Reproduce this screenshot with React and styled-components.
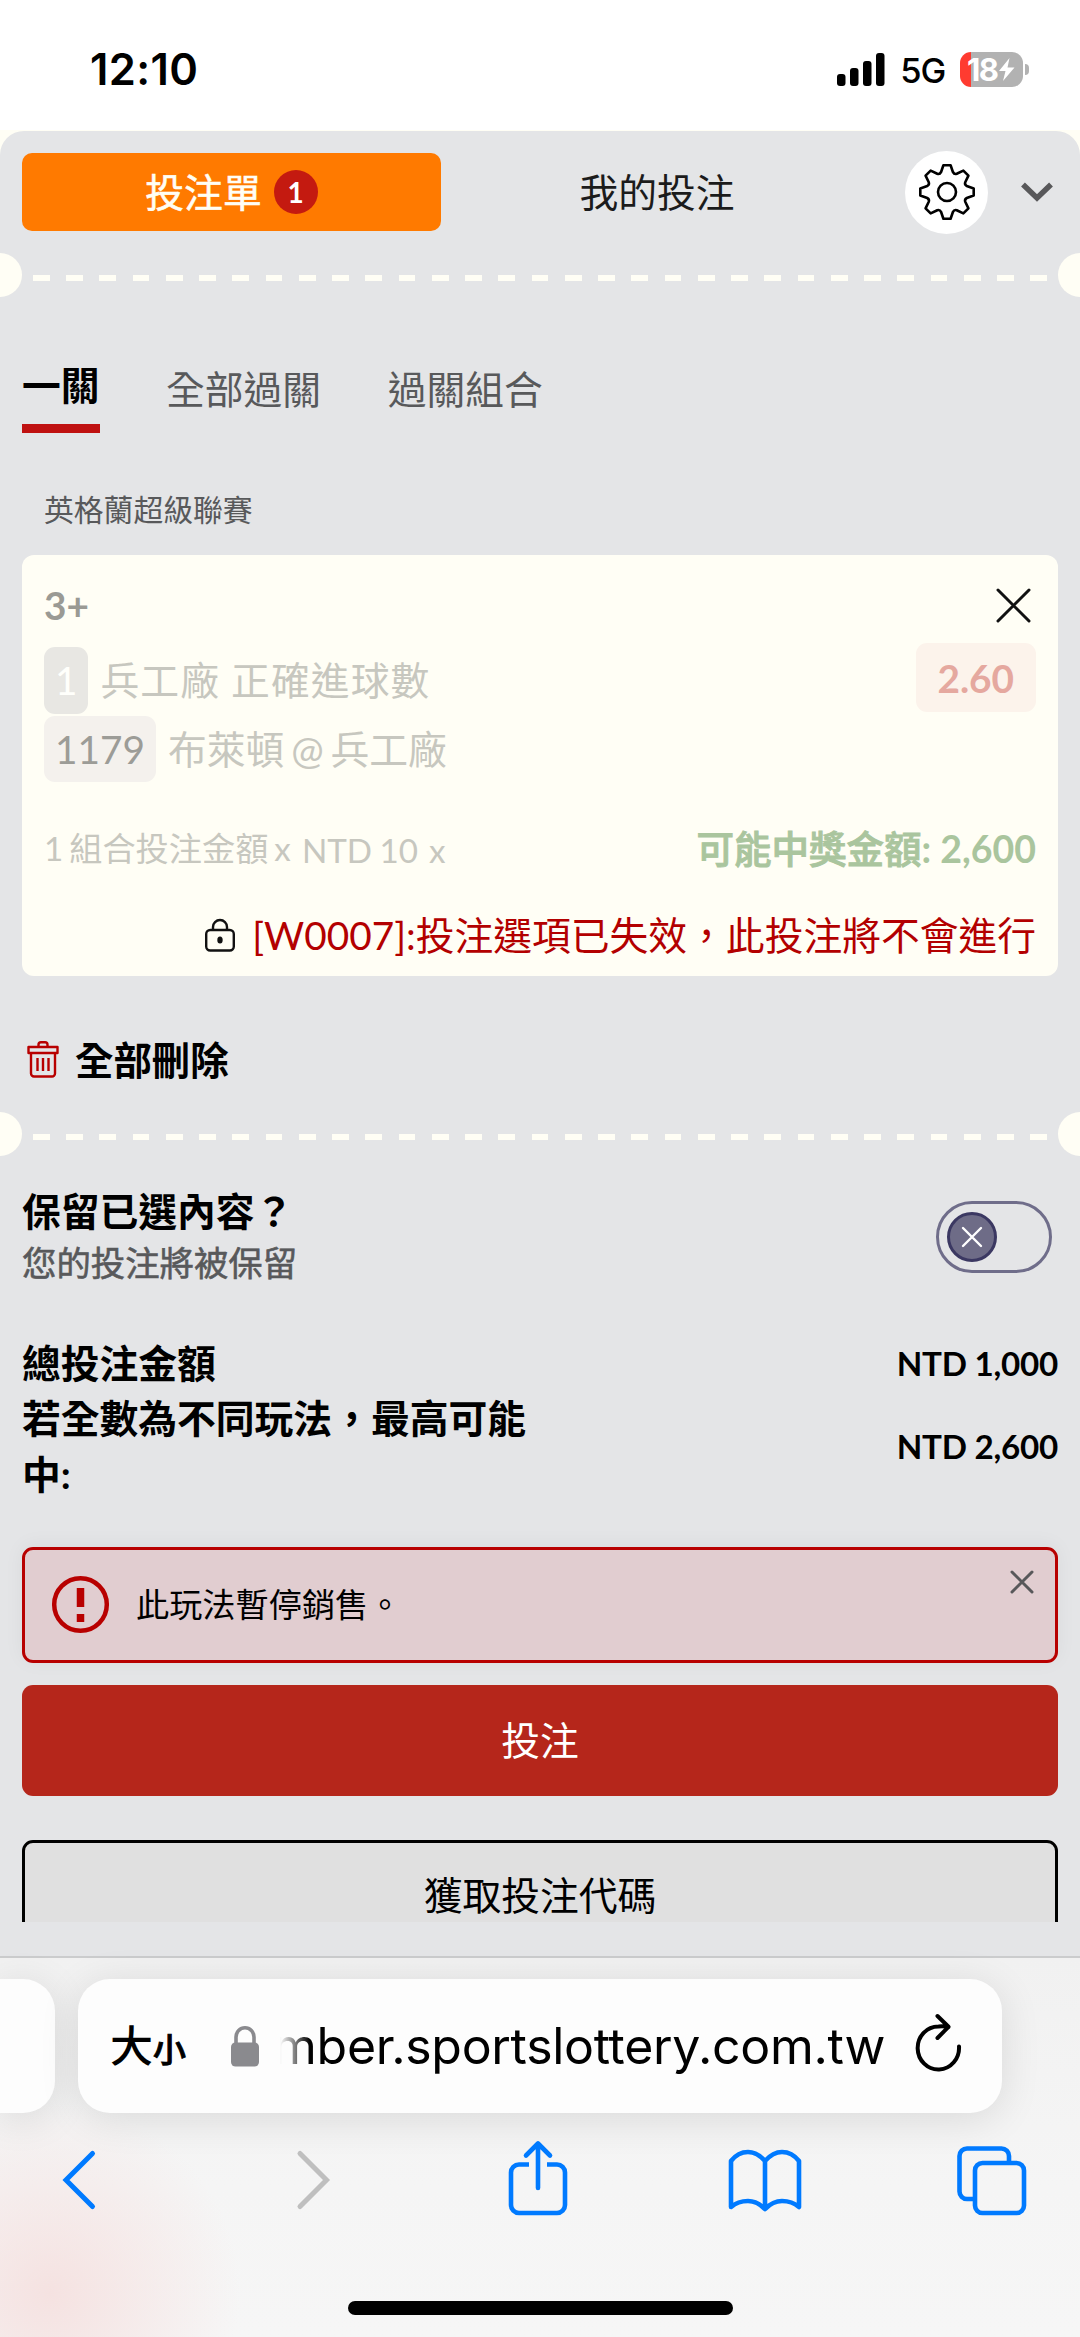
import React from "react"
import styled, { createGlobalStyle } from "styled-components"

const Colors = {
  Paper: "#fffef5",
  Slip: "#e4e5e7",
  Orange: "#ff7a00",
  Red: "#b5261b",
  ErrorRed: "#b80000",
  Grey: "#58595b",
  Blue: "#007aff",
}

const GlobalStyle = createGlobalStyle`
  * {
    box-sizing: border-box;
  }

  body {
    margin: 0;
    background: #fff;
    color: #000;
    font-family: Lato, "Noto Sans CJK TC", sans-serif;
    font-size: 38.77px;
  }

  button {
    border: 0;
    padding: 0;
    background: none;
    color: inherit;
    font: inherit;
  }

  svg {
    display: block;
    flex: none;
    overflow: visible;
  }
`

const Screen = styled.div`
  width: 1080px;
  height: 2337px;
  overflow: hidden;
  display: flex;
  flex-direction: column;
`

/* Status bar */

const StatusBar = styled.header`
  flex: none;
  height: 130px;
  padding: 8px 51px 0 90px;
  display: flex;
  align-items: center;
  justify-content: space-between;
  font-family: Inter, sans-serif;
`

const Time = styled.span`
  font-size: 43.5px;
  font-weight: 600;
  letter-spacing: 0.4px;
`

const StatusIcons = styled.div`
  display: flex;
  align-items: center;
  gap: 15px;
`

const Network = styled.span`
  font-size: 34.5px;
  font-weight: 500;
  line-height: 36px;
  letter-spacing: -1.2px;
  padding-top: 3px;
`

const BatteryWrapper = styled.div`
  display: flex;
  align-items: center;
  gap: 2px;
`

const Battery = styled.div`
  width: 63px;
  height: 35px;
  border-radius: 11px;
  padding-left: 7px;
  display: flex;
  align-items: center;
  background: linear-gradient(90deg, #ff3b30 11px, #b2b2b2 11px);
  color: #fff;
  font-size: 31px;
  font-weight: 700;
  letter-spacing: -1.5px;
`

const BatteryTip = styled.span`
  width: 4px;
  height: 11px;
  border-radius: 0 6px 6px 0;
  background: #b2b2b2;
`

/* Bet slip */

const SlipBackdrop = styled.div`
  flex: none;
  height: 1826px;
  padding-top: 1px;
  background: ${Colors.Paper};
`

const Slip = styled.main`
  height: 1825px;
  border-radius: 24px 24px 0 0;
  background: ${Colors.Slip};
`

const SlipHeader = styled.div`
  height: 122px;
  padding: 0 27px 0 22px;
  display: flex;
  align-items: center;
`

const HeaderTab = styled.button`
  width: ${({ $width }) => $width}px;
  height: 78px;
  border-radius: 10px;
  display: flex;
  align-items: center;
  justify-content: center;
  gap: 12px;
  line-height: 54px;
  background: ${({ $active }) => ($active ? Colors.Orange : "transparent")};
  color: ${({ $active }) => ($active ? Colors.Paper : "#1b1b1b")};
  -webkit-text-stroke: ${({ $active }) => ($active ? "0.6px" : "0")};
`

const Count = styled.span`
  width: 44px;
  height: 44px;
  border-radius: 50%;
  background: #c41a10;
  color: #fff;
  font-size: 28px;
  font-weight: 700;
  line-height: 44px;
  -webkit-text-stroke: 0;
`

const SettingsButton = styled.button`
  width: 83px;
  height: 83px;
  margin: 0 33px 0 auto;
  border-radius: 50%;
  display: flex;
  align-items: center;
  justify-content: center;
  background: #fff;
`

const PerforationWrapper = styled.div`
  height: 44px;
  display: flex;
  align-items: center;
  justify-content: space-between;
`

const Notch = styled.span`
  width: 22px;
  height: 44px;
  border-radius: ${({ $right }) => ($right ? "22px 0 0 22px" : "0 22px 22px 0")};
  background: ${Colors.Paper};
`

const Dashes = styled.span`
  width: 1014px;
  height: 6px;
  margin-top: 6px;
  background: repeating-linear-gradient(
    90deg,
    ${Colors.Paper} 0 16.6px,
    transparent 16.6px 33.25px
  );
`

const BetTypes = styled.nav`
  height: 136px;
  padding: 0 22px;
  display: flex;
  align-items: flex-end;
  gap: 66.5px;
`

const BetType = styled.button`
  height: 76px;
  line-height: ${({ $active }) => ($active ? 56 : 65)}px;
  padding-bottom: ${({ $active }) => ($active ? 11 : 11)}px;
  border-bottom: ${({ $active }) => ($active ? "9px solid #bf1111" : "0")};
  color: ${({ $active }) => ($active ? "#000" : Colors.Grey)};
  font-weight: ${({ $active }) => ($active ? 700 : 400)};
`

const League = styled.p`
  height: 121.5px;
  margin: 0;
  padding: 57px 44px 0;
  color: ${Colors.Grey};
  font-size: 29.8px;
  line-height: 40px;
`

const Card = styled.section`
  height: 421.5px;
  margin: 0 22px;
  padding: 27.5px 22px 0;
  border-radius: 12px;
  background: ${Colors.Paper};
  color: #c7c7bf;
`

const CardRow = styled.div`
  height: ${({ $height }) => $height}px;
  margin-top: ${({ $top }) => $top || 0}px;
  display: flex;
  align-items: ${({ $align }) => $align || "center"};
  justify-content: space-between;
`

const Pick = styled.strong`
  color: #9a9a94;
  line-height: 46px;
`

const CloseButton = styled.button`
  padding: 0 7px 0 0;
`

const Line = styled.div`
  margin-top: ${({ $top }) => $top || 0}px;
  display: flex;
  align-items: center;
  gap: 12px;
  line-height: 65px;
  letter-spacing: ${({ $spacing }) => $spacing || 0}px;
  word-spacing: ${({ $word }) => $word || 0}px;
`

const Tag = styled.span`
  height: 66.5px;
  padding: 1px 11px 0;
  border-radius: 11px;
  letter-spacing: 0;
  background: ${({ $muted }) => ($muted ? "#e8e7e3" : "#f4f1ed")};
  color: ${({ $muted }) => ($muted ? "#fffffb" : "#9c9c97")};
`

const Odds = styled.strong`
  width: 120.5px;
  height: 69px;
  border-radius: 11px;
  background: #fcf3eb;
  color: #e5a89f;
  line-height: 71px;
  text-align: center;
`

const Stake = styled.div`
  display: flex;
  align-items: center;
  gap: 11px;
  font-size: 33.2px;
  line-height: 46px;
  padding-bottom: 4px;
  word-spacing: -2.5px;
`

const StakeAmount = styled.span`
  padding-top: 4px;
  word-spacing: ${({ $word }) => $word || 0}px;
`

const Winnings = styled.span`
  padding-bottom: 2px;
  color: #aac59e;
  font-size: 37.5px;
  font-weight: 700;
  line-height: 48px;
`

const CjkMedium = styled.span`
  font-weight: 500;
  -webkit-text-stroke: 0.9px;
`

const CardError = styled.div`
  height: 50px;
  margin-top: 35px;
  display: flex;
  align-items: center;
  justify-content: flex-end;
  gap: 17px;
  color: #b30000;
  line-height: 48px;
  white-space: nowrap;
`

const DeleteAll = styled.button`
  height: 136px;
  padding: 31px 27px 0;
  display: flex;
  align-items: center;
  gap: 16px;
  font-size: 38.4px;
  font-weight: 700;
  line-height: 56px;
`

const KeepRow = styled.div`
  height: 130px;
  padding: 24px 28px 0 22px;
  display: flex;
  align-items: center;
  justify-content: space-between;
`

const KeepTitle = styled.div`
  font-weight: 700;
  line-height: 60px;
`

const KeepHint = styled.div`
  color: ${Colors.Grey};
  font-size: 34.4px;
  line-height: 44px;
  -webkit-text-stroke: 0.6px;
`

const Toggle = styled.button`
  width: 116px;
  height: 72px;
  margin-top: 8px;
  padding-left: 8px;
  border: 3px solid #6f6d8a;
  border-radius: 36px;
  display: flex;
  align-items: center;
`

const Knob = styled.span`
  width: 50px;
  height: 50px;
  border: 3px solid #3b3862;
  border-radius: 50%;
  display: flex;
  align-items: center;
  justify-content: center;
  background: #6e6c87;
`

const Totals = styled.dl`
  margin: 50px 22px 45px;
  display: grid;
  grid-template-columns: 530px auto;
  align-items: center;
  justify-content: space-between;
  font-weight: 700;
  line-height: 55.4px;

  dt,
  dd {
    margin: 0;
  }

  dd {
    font-size: 33.2px;
    text-align: right;
    letter-spacing: -0.25px;
  }
`

const Alert = styled.div`
  height: 116px;
  margin: 0 22px;
  padding: 0 22px 0 27px;
  border: 3px solid ${Colors.ErrorRed};
  border-radius: 11px;
  display: flex;
  align-items: center;
  gap: 27px;
  background: #e1cdd0;
  box-shadow: 0 -2px 20px rgba(0, 0, 0, 0.05);
  font-size: 33.2px;
  line-height: 50px;

  svg,
  span {
    margin-bottom: 2px;
  }
`

const AlertClose = styled.button`
  align-self: flex-start;
  margin: 22px 1px 0 auto;
`

const PlaceBet = styled.button`
  display: block;
  width: 1036px;
  height: 111px;
  margin: 22px 22px 44px;
  padding-bottom: 5px;
  border-radius: 11px;
  background: ${Colors.Red};
  color: #fff;
`

const Fold = styled.div`
  height: 82px;
  padding: 0 22px;
  overflow: hidden;
`

const CodeButton = styled.button`
  width: 100%;
  height: 111px;
  padding-bottom: 5px;
  border: 3px solid #000;
  border-radius: 11px;
  background: #e0e0e0;
`

/* Browser bar */

const BrowserBar = styled.footer`
  flex: 1;
  border-top: 2px solid #cbcccd;
  display: flex;
  flex-direction: column;
  align-items: center;
  background:
    radial-gradient(circle at 50px 335px, #f5e2e1 0, rgba(245, 228, 227, 0) 190px),
    linear-gradient(#f1f1f1, #f5f5f5 60%, #f6f6f6);
`

const AddressRow = styled.div`
  width: 100%;
  margin-top: 21px;
  display: flex;
  gap: 23px;
`

const AddressTab = styled.div`
  width: ${({ $width }) => $width}px;
  height: 133.5px;
  border-radius: ${({ $cut }) => ($cut ? "0 32px 32px 0" : "32px")};
  padding: ${({ $cut }) => ($cut ? 0 : "0 41px 0 32px")};
  display: flex;
  align-items: center;
  background: #fdfdfd;
  box-shadow: 0 6px 40px rgba(0, 0, 0, 0.11);
`

const TextSize = styled.span`
  width: 121px;
  font-family: "Noto Sans CJK TC", sans-serif;
  font-size: 43px;
  font-weight: 500;
  line-height: 60px;

  small {
    font-size: 33px;
    -webkit-text-stroke: 0.9px;
  }
`

const Url = styled.span`
  flex: none;
  width: 613px;
  margin: 0 auto 0 13px;
  overflow: hidden;
  display: flex;
  justify-content: flex-end;
  font-family: Inter, sans-serif;
  font-size: 50px;
  line-height: 66px;
  letter-spacing: -0.3px;
  white-space: nowrap;
  mask-image: linear-gradient(90deg, transparent 8px, #000 38px);
`

const ReloadIcon = styled.svg`
  margin-bottom: 7px;
`

const Toolbar = styled.div`
  width: 100%;
  height: 136px;
  padding: 0 50px 0 40.5px;
  display: flex;
  align-items: center;
  justify-content: space-between;
  color: ${Colors.Blue};
`

const HomeIndicator = styled.div`
  width: 385px;
  height: 14px;
  margin-top: 52px;
  border-radius: 7px;
  background: #000;
`

const Cross = ({ size, width, color = "currentColor" }) => (
  <svg width={size} height={size} fill="none" stroke={color} strokeWidth={width} strokeLinecap="round">
    <path d={`M0 0L${size} ${size}M${size} 0L0 ${size}`} />
  </svg>
)

const Perforation = () => (
  <PerforationWrapper>
    <Notch />
    <Dashes />
    <Notch $right />
  </PerforationWrapper>
)

const Signal = () => (
  <svg width="48" height="33">
    <rect x="0" y="21" width="8.5" height="12" rx="3" />
    <rect x="13" y="15" width="8.5" height="18" rx="3" />
    <rect x="26" y="8" width="8.5" height="25" rx="3" />
    <rect x="39" y="0" width="8.5" height="33" rx="3" />
  </svg>
)

// one tooth per 45 degrees, with the valley that follows it
const gearPath = () => {
  const rotate = (x, y, step) => {
    const a = (step * Math.PI) / 4
    const rx = x * Math.cos(a) - y * Math.sin(a)
    const ry = x * Math.sin(a) + y * Math.cos(a)
    return `${rx.toFixed(2)} ${ry.toFixed(2)}`
  }
  const teeth = [0, 1, 2, 3, 4, 5, 6, 7].map(
    (i) =>
      `${rotate(-3.6, -26.7, i)}L${rotate(3.6, -26.7, i)}L${rotate(6, -19.8, i)}` +
      `Q${rotate(7.2, -17.4, i)} ${rotate(-6, -19.8, i + 1)}`
  )
  return `M${teeth.join("L")}Z`
}

const Gear = () => (
  <svg width="56" height="56" viewBox="-28 -28 56 56" fill="none" stroke="#000" strokeWidth="2.6" strokeLinejoin="round">
    <path d={gearPath()} />
    <circle r="9" />
  </svg>
)

const Padlock = () => (
  <svg width="30" height="32" fill="none" stroke="#111" strokeWidth="2.4">
    <rect x="1.2" y="11" width="27.6" height="20.5" rx="4" />
    <path d="M8 11V8a7 7 0 0 1 14 0v3" />
    <ellipse cx="15" cy="21" rx="2.7" ry="3.5" fill="#111" stroke="none" />
  </svg>
)

const Trash = () => (
  <svg width="32" height="37" fill="none" stroke={Colors.ErrorRed} strokeWidth="2.4" strokeLinejoin="round">
    <path d="M1.5 6h29v6h-29zM4 12v20.5a3 3 0 0 0 3 3h18a3 3 0 0 0 3-3V12M11.5 6V3.8Q11.5 1.3 14 1.3h4q2.5 0 2.5 2.5V6" />
    <path d="M10.5 17v13M16 17v13M21.5 17v13" />
  </svg>
)

const SlipCard = () => (
  <Card>
    <CardRow $height={46}>
      <Pick>3+</Pick>
      <CloseButton aria-label="close">
        <Cross size={31} width={3} color="#111" />
      </CloseButton>
    </CardRow>
    <CardRow $height={70.5} $top={15} $align="flex-start">
      <Line $spacing={1.1} $top={4}>
        <Tag $muted>1</Tag>
        <span>兵工廠 正確進球數</span>
      </Line>
      <Odds>2.60</Odds>
    </CardRow>
    <CardRow $height={66} $top={2.5}>
      <Line $word={-3}>
        <Tag>1179</Tag>
        <span>布萊頓 @ 兵工廠</span>
      </Line>
    </CardRow>
    <CardRow $height={50} $top={43}>
      <Stake>
        <span>1 組合投注金額 x</span>
        <StakeAmount $word={-1}>NTD 10</StakeAmount>
        <StakeAmount>x</StakeAmount>
      </Stake>
      <Winnings>
        <CjkMedium>可能中獎金額</CjkMedium>: 2,600
      </Winnings>
    </CardRow>
    <CardError>
      <Padlock />
      <span>[W0007]:投注選項已失效，此投注將不會進行</span>
    </CardError>
  </Card>
)

const Browser = () => (
  <BrowserBar>
    <AddressRow>
      <AddressTab $width={55} $cut />
      <AddressTab $width={924}>
        <TextSize>
          大<small>小</small>
        </TextSize>
        <svg width="28" height="40" fill="none" stroke="#8a8a8e" strokeWidth="3.6">
          <path d="M5 18V11a9 9.2 0 0 1 18 0v7" />
          <rect y="16.5" width="28" height="24" rx="4.5" fill="#8a8a8e" stroke="none" />
        </svg>
        <Url>
          <span>mber.sportslottery.com.tw</span>
        </Url>
        <ReloadIcon width="45" height="56" fill="none" stroke="#000" strokeWidth="4" strokeLinecap="round" strokeLinejoin="round">
          <path d="M43 32.5A20.7 21.5 0 1 1 22.5 12.5Q28 12 32.5 13M21.5 2L32.5 12.8L21.5 24" />
        </ReloadIcon>
      </AddressTab>
    </AddressRow>
    <Toolbar>
      <svg width="76" height="76" fill="none" stroke="currentColor" strokeWidth="5" strokeLinecap="round">
        <path d="M51.5 10.5L25 37L51.5 63.5" />
      </svg>
      <svg width="76" height="76" fill="none" stroke="#bfbfbf" strokeWidth="5" strokeLinecap="round">
        <path d="M31 10.5L57.5 37L31 63.5" />
      </svg>
      <svg width="76" height="76" fill="none" stroke="currentColor" strokeWidth="4.6" strokeLinejoin="round">
        <path d="M32 21.5H22a8 8 0 0 0-8 8V62a8 8 0 0 0 8 8h38a8 8 0 0 0 8-8V29.5a8 8 0 0 0-8-8H50" />
        <path d="M41 45V2M29 12.5L41 0.5L53 12.5" strokeLinecap="round" />
      </svg>
      <svg width="76" height="76" fill="none" stroke="currentColor" strokeWidth="4.6" strokeLinejoin="round" strokeLinecap="round">
        <path d="M39 18Q31 9 22 9Q12 9 5 18V64Q12 58 22 58Q31 58 39 66Q47 58 56 58Q66 58 73 64V18Q66 9 56 9Q47 9 39 18V66" />
      </svg>
      <svg width="76" height="76" fill="none" stroke="currentColor" strokeWidth="4.6">
        <path d="M21 56H13a7.5 7.5 0 0 1-7.5-7.5V13a7.5 7.5 0 0 1 7.5-7.5h34.500A7.5 7.5 0 0 1 55 13v7" />
        <rect x="21" y="20" width="49" height="50" rx="7.5" />
      </svg>
    </Toolbar>
    <HomeIndicator />
  </BrowserBar>
)

const App = () => {
  return (
    <Screen>
      <GlobalStyle />
      <StatusBar>
        <Time>12:10</Time>
        <StatusIcons>
          <Signal />
          <Network>5G</Network>
          <BatteryWrapper>
            <Battery>
              18
              <svg width="17" height="23" fill="#fff">
                <path d="M11.5 0L1 13H7.5L5 23L16.5 9.5H9.5Z" />
              </svg>
            </Battery>
            <BatteryTip />
          </BatteryWrapper>
        </StatusIcons>
      </StatusBar>

      <SlipBackdrop>
        <Slip>
          <SlipHeader>
            <HeaderTab $active $width={419}>
              投注單 <Count>1</Count>
            </HeaderTab>
            <HeaderTab $width={432}>我的投注</HeaderTab>
            <SettingsButton aria-label="settings">
              <Gear />
            </SettingsButton>
            <svg width="32" height="18" fill="none" stroke="#58585a" strokeWidth="5.5">
              <path d="M2 1.5L16 15L30 1.5" />
            </svg>
          </SlipHeader>
          <Perforation />

          <BetTypes>
            <BetType $active>一關</BetType>
            <BetType>全部過關</BetType>
            <BetType>過關組合</BetType>
          </BetTypes>
          <League>英格蘭超級聯賽</League>
          <SlipCard />
          <DeleteAll>
            <Trash />
            全部刪除
          </DeleteAll>
          <Perforation />

          <KeepRow>
            <div>
              <KeepTitle>保留已選內容？</KeepTitle>
              <KeepHint>您的投注將被保留</KeepHint>
            </div>
            <Toggle role="switch" aria-checked="false">
              <Knob>
                <Cross size={18} width={2.4} color="#fff" />
              </Knob>
            </Toggle>
          </KeepRow>
          <Totals>
            <dt>總投注金額</dt>
            <dd>NTD 1,000</dd>
            <dt>若全數為不同玩法，最高可能中:</dt>
            <dd>NTD 2,600</dd>
          </Totals>

          <Alert>
            <svg width="57" height="57" fill="none" stroke={Colors.ErrorRed} strokeWidth="4.5">
              <circle cx="28.5" cy="28.5" r="26.3" />
              <path d="M28.5 12V31M28.5 38V46" strokeWidth="7.5" />
            </svg>
            <span>此玩法暫停銷售。</span>
            <AlertClose aria-label="dismiss">
              <Cross size={20} width={3} color="#58585a" />
            </AlertClose>
          </Alert>
          <PlaceBet>投注</PlaceBet>
          <Fold>
            <CodeButton>獲取投注代碼</CodeButton>
          </Fold>
        </Slip>
      </SlipBackdrop>

      <Browser />
    </Screen>
  )
}

export default App
